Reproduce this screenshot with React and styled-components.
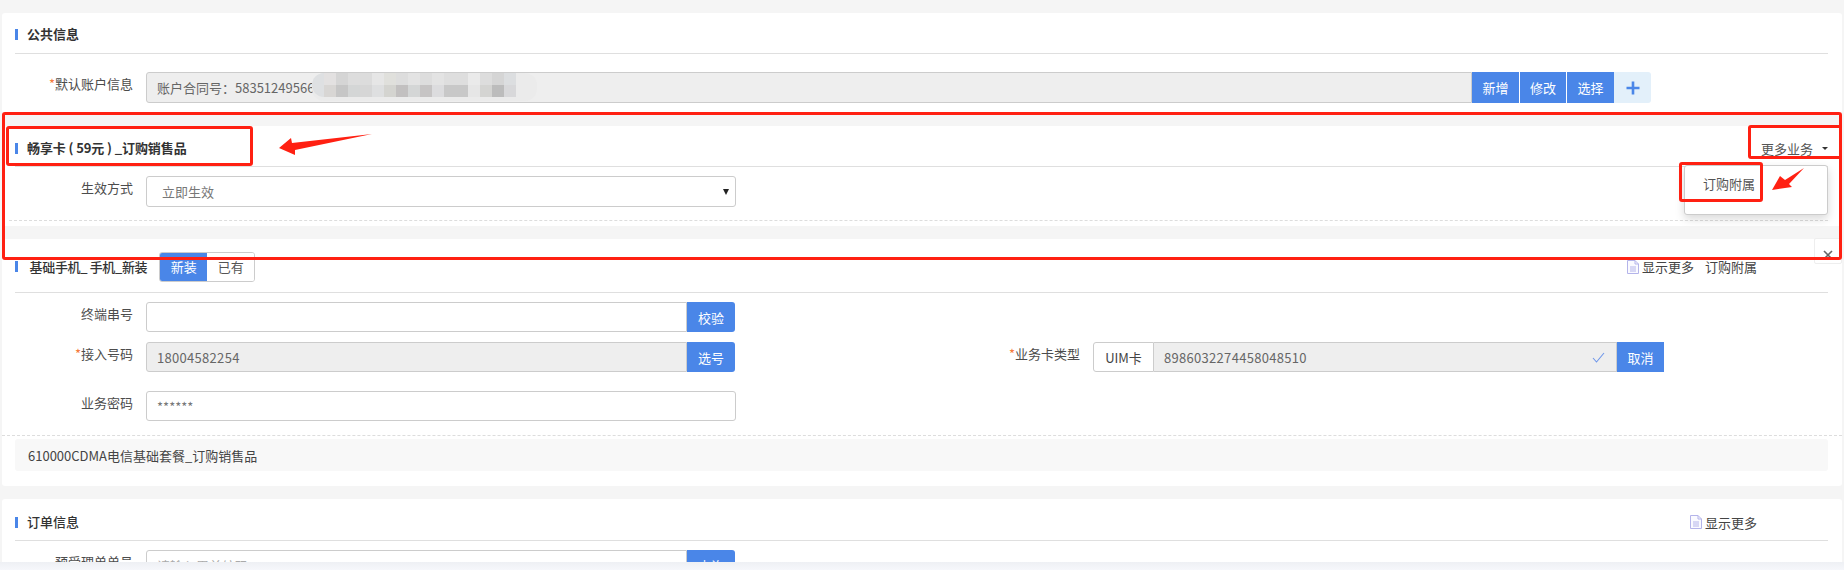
import styled, { createGlobalStyle } from 'styled-components';

const GlobalStyle = createGlobalStyle`
  html, body {
    margin: 0;
    background: #f5f5f5;
  }
  * {
    box-sizing: border-box;
  }
`;

const Screen = styled.div`
  position: relative;
  width: 1844px;
  height: 570px;
  overflow: hidden;
  font-family: 'Microsoft YaHei', 'Noto Sans CJK SC', sans-serif;
  font-size: 13px;
  color: #555;
  background: #f5f5f5;
`;
const Main = styled.main`
  height: 562px;
  overflow: hidden;
  padding: 13px 2px 0;
  display: flex;
  flex-direction: column;
  gap: 13px;
`;
const BottomStrip = styled.div`
  height: 8px;
  background: linear-gradient(#eef0f4, #f6f7fb);
`;
const Card = styled.section`
  flex: 0 0 ${(p) => p.$height}px;
  background: #fff;
  border-radius: 3px;
  padding: 0 14px 0 13px;
`;
const Header = styled.header`
  height: ${(p) => p.$height}px;
  display: flex;
  align-items: center;
  justify-content: space-between;
  border-bottom: 1px solid #dfdfdf;
  padding-top: ${(p) => p.$top ?? 4}px;
`;
const Title = styled.h3`
  margin: 0;
  display: flex;
  align-items: center;
  gap: 9px;
  font-size: 13px;
  line-height: 20px;
  font-weight: ${(p) => (p.$light ? 500 : 700)};
  color: #333;
  white-space: pre;
  letter-spacing: ${(p) => p.$tight || 0}px;
  &::before {
    content: '';
    width: 3px;
    height: 11px;
    background: #4a86e8;
  }
`;
const Toggle = styled.div`
  display: flex;
  height: 30px;
  margin-left: 12px;
  border: 1px solid #ccc;
  border-radius: 3px;
  overflow: hidden;
`;
const ToggleItem = styled.div`
  width: 47px;
  display: flex;
  align-items: center;
  justify-content: center;
  font-weight: 400;
  background: ${(p) => (p.$active ? '#4a86e8' : '#fff')};
  color: ${(p) => (p.$active ? '#fff' : '#555')};
`;
const TitleGroup = styled.div`
  display: flex;
  align-items: center;
`;
const HeaderLinks = styled.div`
  display: flex;
  align-items: center;
  gap: 11px;
  color: #444;
  margin-right: 71px;
`;
const ShowMore = styled.span`
  display: flex;
  align-items: center;
  gap: 3px;
`;
const MoreButton = styled.div`
  width: 67px;
  display: flex;
  align-items: center;
  justify-content: space-between;
  color: #555;
  &::after {
    content: '';
    border-left: 3px solid transparent;
    border-right: 3px solid transparent;
    border-top: 3px solid #333;
  }
`;
const Rows = styled.div`
  padding-top: ${(p) => p.$top ?? 9}px;
  display: flex;
  flex-direction: column;
  gap: 10px;
`;
const Row = styled.div`
  display: flex;
  margin-top: ${(p) => p.$top || 0}px;
`;
const Field = styled.div`
  display: flex;
  flex: 0 0 ${(p) => p.$width}px;
  gap: 13px;
`;
const Label = styled.label`
  flex: 0 0 ${(p) => p.$width || 118}px;
  text-align: right;
  line-height: 24px;
  color: #4c4c4c;
  white-space: nowrap;
`;
const Star = styled.span`
  color: #f5793b;
`;
const Control = styled.div`
  display: flex;
  width: ${(p) => p.$width}px;
  height: ${(p) => p.$height || 30}px;
`;
const Input = styled.div`
  flex: 1;
  display: flex;
  align-items: center;
  justify-content: space-between;
  height: 100%;
  padding: 0 11px 0 ${(p) => p.$left || 10}px;
  border: 1px solid #ccc;
  border-radius: ${(p) => (p.$joined ? '3px 0 0 3px' : '3px')};
  background: ${(p) => (p.$disabled ? '#eee' : '#fff')};
  color: ${(p) => (p.$disabled ? '#666' : '#777')};
  letter-spacing: ${(p) => p.$spacing || 0}px;
  white-space: nowrap;
  ${(p) => p.$flat && 'border-radius: 0; border-left: 0;'}
`;
const SelectArrow = styled.span`
  margin-right: -5px;
  border-left: 3.5px solid transparent;
  border-right: 3.5px solid transparent;
  border-top: 6px solid #222;
`;
const Placeholder = styled.span`
  color: #aaa;
`;
const Addon = styled.div`
  flex: 0 0 61px;
  display: flex;
  align-items: center;
  justify-content: center;
  border: 1px solid #ccc;
  border-radius: 3px 0 0 3px;
  color: #444;
`;
const BlueButton = styled.button`
  flex: 0 0 ${(p) => p.$width || 48}px;
  height: 100%;
  margin: 0 ${(p) => p.$gap || 0}px 0 0;
  padding: 0;
  border: 0;
  border-radius: ${(p) => (p.$end ? '0 3px 3px 0' : '0')};
  background: #4a86e8;
  color: #fff;
  font: inherit;
`;
const PlusButton = styled.button`
  flex: 0 0 37px;
  height: 100%;
  padding: 0;
  border: 0;
  border-radius: 0 3px 3px 0;
  background: #e3f0fa;
  display: flex;
  align-items: center;
  justify-content: center;
`;
const Dashed = styled.div`
  border-top: 1px dashed #ddd;
  margin: ${(p) => p.$top}px ${(p) => (p.$full ? '-14px' : '0')} 0 ${(p) => (p.$full ? '-13px' : '-6px')};
`;
const PlanBar = styled.div`
  height: 32px;
  margin-top: 3px;
  padding-left: 13px;
  display: flex;
  align-items: center;
  background: #f8f8f8;
  border-radius: 3px;
  color: #444;
`;

/* things lying over the page */
const Menu = styled.div`
  position: absolute;
  left: 1684px;
  top: 165px;
  width: 144px;
  height: 50px;
  padding: 7px 0 0 18px;
  line-height: 22px;
  background: #fff;
  border: 1px solid #ccc;
  border-radius: 3px;
  box-shadow: 0 4px 10px rgba(0, 0, 0, 0.15);
  color: #555;
`;
const CloseBox = styled.div`
  position: absolute;
  left: 1814px;
  top: 238px;
  width: 28px;
  height: 26px;
  padding: 7px 0 0 7px;
  background: #fff;
  border: 1px solid #eee;
  border-radius: 2px;
`;
const RedBox = styled.div`
  position: absolute;
  left: ${(p) => p.$x}px;
  top: ${(p) => p.$y}px;
  width: ${(p) => p.$w}px;
  height: ${(p) => p.$h}px;
  border: 3px solid #ff2012;
  border-radius: 3px;
  pointer-events: none;
`;
const Overlay = styled.svg`
  position: absolute;
  left: 0;
  top: 0;
  pointer-events: none;
`;

const mosaicTop = ['#e3e1e1', '#d5d5d5', '#dddddd', '#dcdcdc', '#e6e6e6', '#e0e0dc', '#dddddd', '#e3e3e3', '#dddddd', '#e3e3e3', '#dedede', '#dedede', '#eaeaea', '#dddddd', '#d5d5d5', '#dcdee0'];
const mosaicBottom = ['#d8d6d4', '#c6c6c6', '#d4d6d6', '#d6d6d6', '#dedfe0', '#d4d4d0', '#c2c0c0', '#d4d6d6', '#c6c4c4', '#dcdcde', '#c8c8c8', '#c8c8c8', '#e6e6e6', '#d4d4d2', '#bcbcbc', '#d8d8da'];

function DocIcon() {
  return (
    <svg width="12" height="14" viewBox="0 0 12 14" fill="none" stroke="#b4b4ea" strokeWidth="1">
      <path d="M.5.5h7.5l3.5 3.5v9.5h-11z" fill="#fafaff" />
      <path d="M8 .5v3.5h3.5M3 7h6M3 9h6M3 11h6" />
    </svg>
  );
}

export default function App() {
  return (
    <Screen>
      <GlobalStyle />
      <Main>
        <Card $height={100}>
          <Header $height={41} $top={2}>
            <Title>公共信息</Title>
          </Header>
          <Rows $top={18}>
            <Row>
              <Field $width={1813}>
                <Label>
                  <Star>*</Star>默认账户信息
                </Label>
                <Control $width={1505} $height={31}>
                  <Input $disabled $joined>账户合同号：58351249566</Input>
                  <BlueButton $width={47} $gap={1}>新增</BlueButton>
                  <BlueButton $width={46} $gap={1}>修改</BlueButton>
                  <BlueButton $width={47}>选择</BlueButton>
                  <PlusButton aria-label="添加">
                    <svg width="16" height="16" viewBox="0 0 16 16">
                      <path d="M8 1.5v13M1.5 8h13" stroke="#4a86e8" strokeWidth="2.6" />
                    </svg>
                  </PlusButton>
                </Control>
              </Field>
            </Row>
          </Rows>
        </Card>

        <Card $height={100}>
          <Header $height={41}>
            <Title $tight={-0.1}>畅享卡 ( 59元 ) _订购销售品</Title>
            <MoreButton>更多业务</MoreButton>
          </Header>
          <Rows>
            <Row>
              <Field $width={1813}>
                <Label>生效方式</Label>
                <Control $width={590} $height={31}>
                  <Input $left={15}>
                    立即生效
                    <SelectArrow />
                  </Input>
                </Control>
              </Field>
            </Row>
          </Rows>
          <Dashed $top={13} />
        </Card>

        <Card $height={247}>
          <Header $height={54} $top={2}>
            <TitleGroup>
              <Title $light $tight={-0.35}>{'\u00a0基础手机_ 手机_新装'}</Title>
              <Toggle>
                <ToggleItem $active>新装</ToggleItem>
                <ToggleItem>已有</ToggleItem>
              </Toggle>
            </TitleGroup>
            <HeaderLinks>
              <ShowMore>
                <DocIcon />
                显示更多
              </ShowMore>
              <span>订购附属</span>
            </HeaderLinks>
          </Header>
          <Rows>
            <Row>
              <Field $width={906}>
                <Label>终端串号</Label>
                <Control $width={589}>
                  <Input $joined />
                  <BlueButton $end>校验</BlueButton>
                </Control>
              </Field>
            </Row>
            <Row>
              <Field $width={906}>
                <Label>
                  <Star>*</Star>接入号码
                </Label>
                <Control $width={589}>
                  <Input $disabled $joined $spacing={0.3}>18004582254</Input>
                  <BlueButton $end>选号</BlueButton>
                </Control>
              </Field>
              <Field $width={700}>
                <Label $width={159}>
                  <Star>*</Star>业务卡类型
                </Label>
                <Control $width={571}>
                  <Addon>UIM卡</Addon>
                  <Input $disabled $flat $spacing={0.3}>
                    8986032274458048510
                    <svg width="13" height="11" viewBox="0 0 13 11" fill="none" stroke="#6f97ea" strokeWidth="1.1">
                      <path d="M1 6l3.5 4L12 1" />
                    </svg>
                  </Input>
                  <BlueButton $width={47}>取消</BlueButton>
                </Control>
              </Field>
            </Row>
            <Row $top={9}>
              <Field $width={906}>
                <Label>业务密码</Label>
                <Control $width={590}>
                  <Input>******</Input>
                </Control>
              </Field>
            </Row>
          </Rows>
          <Dashed $top={14} $full />
          <PlanBar>610000CDMA电信基础套餐_订购销售品</PlanBar>
        </Card>

        <Card $height={100}>
          <Header $height={42} $top={5}>
            <Title $light>订单信息</Title>
            <HeaderLinks>
              <ShowMore>
                <DocIcon />
                显示更多
              </ShowMore>
            </HeaderLinks>
          </Header>
          <Rows>
            <Row>
              <Field $width={906}>
                <Label>预受理单单号</Label>
                <Control $width={589}>
                  <Input $joined>
                    <Placeholder>请输入甩单编码</Placeholder>
                  </Input>
                  <BlueButton $end>查询</BlueButton>
                </Control>
              </Field>
            </Row>
          </Rows>
        </Card>
      </Main>
      <BottomStrip />

      <Menu>订购附属</Menu>
      <CloseBox>
        <svg width="12" height="12" viewBox="0 0 12 12" stroke="#666" strokeWidth="1.6">
          <path d="M2 2l8 8M10 2l-8 8" />
        </svg>
      </CloseBox>

      {/* mosaic over the account number */}
      <Overlay width="1844" height="570">
        <rect x="312" y="73" width="225" height="28" rx="12" fill="#ebebeb" />
        <rect x="312" y="73" width="30" height="24" rx="12" fill="#dee0e2" />
        {mosaicTop.map((c, i) => (
          <rect key={i} x={324 + i * 12} y="73" width="12" height="12" fill={c} />
        ))}
        {mosaicBottom.map((c, i) => (
          <rect key={i} x={324 + i * 12} y="85" width="12" height="12" fill={c} />
        ))}
      </Overlay>

      <RedBox $x={2} $y={112} $w={1840} $h={148} />
      <RedBox $x={6} $y={126} $w={247} $h={40} />
      <RedBox $x={1748} $y={125} $w={94} $h={34} />
      <RedBox $x={1679} $y={162} $w={84} $h={40} />
      <Overlay width="1844" height="570">
        <polygon points="279,148 291,138 292,143 372,134 295,150 295,155" fill="#ff2012" />
        <polygon points="1772,190 1780,176 1785,180 1804,168 1789,184 1792,187" fill="#ff2012" />
      </Overlay>
    </Screen>
  );
}
